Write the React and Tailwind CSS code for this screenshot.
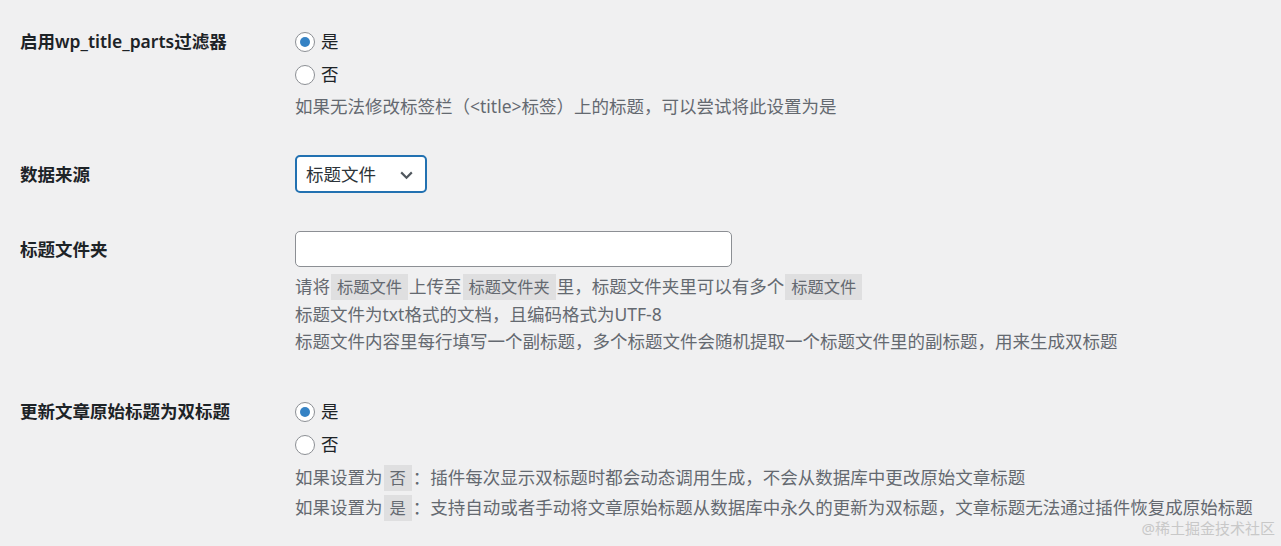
import { useState } from 'react'

const FONT = { fontFamily: '"Segoe UI", "Noto Sans", "Noto Sans CJK SC", sans-serif' }

function Radio({ checked, label, onChange }) {
  return (
    <label className="flex h-[33px] items-center gap-[6px] text-[17.5px] text-[#1d2327] cursor-pointer">
      <span className="flex h-[20px] w-[20px] items-center justify-center rounded-full border border-[#8c8f94] bg-white">
        {checked && <span className="h-[10px] w-[10px] rounded-full bg-[#3582c4]" />}
      </span>
      <input type="radio" className="hidden" checked={checked} onChange={onChange} />
      {label}
    </label>
  )
}

function Code({ children }) {
  return (
    <code
      className="mx-px rounded-none bg-black/[0.07] px-[6px] py-[2px] text-[16.25px]"
      style={FONT}
    >
      {children}
    </code>
  )
}

function Label({ children, lh }) {
  return (
    <div className={`w-[295px] shrink-0 pl-5 text-[17.5px] font-semibold text-[#1d2327] ${lh}`}>
      {children}
    </div>
  )
}

export default function App() {
  const [filter, setFilter] = useState('yes')
  const [update, setUpdate] = useState('yes')
  const [folder, setFolder] = useState('')

  return (
    <div className="relative min-h-[546px] bg-[#f0f0f1]" style={FONT}>
      <div className="flex pt-[25px]">
        <Label lh="leading-[33px]">启用wp_title_parts过滤器</Label>
        <div>
          <Radio checked={filter === 'yes'} label="是" onChange={() => setFilter('yes')} />
          <Radio checked={filter === 'no'} label="否" onChange={() => setFilter('no')} />
          <p className="mt-[2px] text-[17.5px] leading-[27px] text-[#646970]">
            如果无法修改标签栏（&lt;title&gt;标签）上的标题，可以尝试将此设置为是
          </p>
        </div>
      </div>

      <div className="mt-[35px] flex">
        <Label lh="leading-[38px]">数据来源</Label>
        <div className="flex h-[38px] w-[132px] items-center justify-between rounded-[5px] border-2 border-[#2271b1] bg-white pl-[9px] pr-[10px] text-[17.5px] text-[#2c3338]">
          <span>标题文件</span>
          <svg width="17" height="17" viewBox="0 0 16 16" fill="none">
            <path d="M3 6l5 5 5-5" stroke="#50575e" strokeWidth="2" />
          </svg>
        </div>
      </div>

      <div className="mt-[38px] flex">
        <Label lh="leading-[36px]">标题文件夹</Label>
        <div>
          <input
            value={folder}
            onChange={e => setFolder(e.target.value)}
            className="block h-[36px] w-[437px] rounded-[5px] border border-[#8c8f94] bg-white px-2 text-[17.5px] outline-none"
          />
          <div className="mt-[6px] text-[17.5px] leading-[27px] text-[#646970]">
            <p>请将<Code>标题文件</Code>上传至<Code>标题文件夹</Code>里，标题文件夹里可以有多个<Code>标题文件</Code></p>
            <p>标题文件为txt格式的文档，且编码格式为UTF-8</p>
            <p>标题文件内容里每行填写一个副标题，多个标题文件会随机提取一个标题文件里的副标题，用来生成双标题</p>
          </div>
        </div>
      </div>

      <div className="mt-[40px] flex">
        <Label lh="leading-[33px]">更新文章原始标题为双标题</Label>
        <div>
          <Radio checked={update === 'yes'} label="是" onChange={() => setUpdate('yes')} />
          <Radio checked={update === 'no'} label="否" onChange={() => setUpdate('no')} />
          <div className="mt-[2px] text-[17.5px] leading-[29px] text-[#646970]">
            <p>如果设置为<Code>否</Code>：插件每次显示双标题时都会动态调用生成，不会从数据库中更改原始文章标题</p>
            <p>如果设置为<Code>是</Code>：支持自动或者手动将文章原始标题从数据库中永久的更新为双标题，文章标题无法通过插件恢复成原始标题</p>
          </div>
        </div>
      </div>

      <div className="absolute bottom-[7px] right-[6px] text-[15px] leading-[22px] text-[#c8c8c8]">
        @稀土掘金技术社区
      </div>
    </div>
  )
}
